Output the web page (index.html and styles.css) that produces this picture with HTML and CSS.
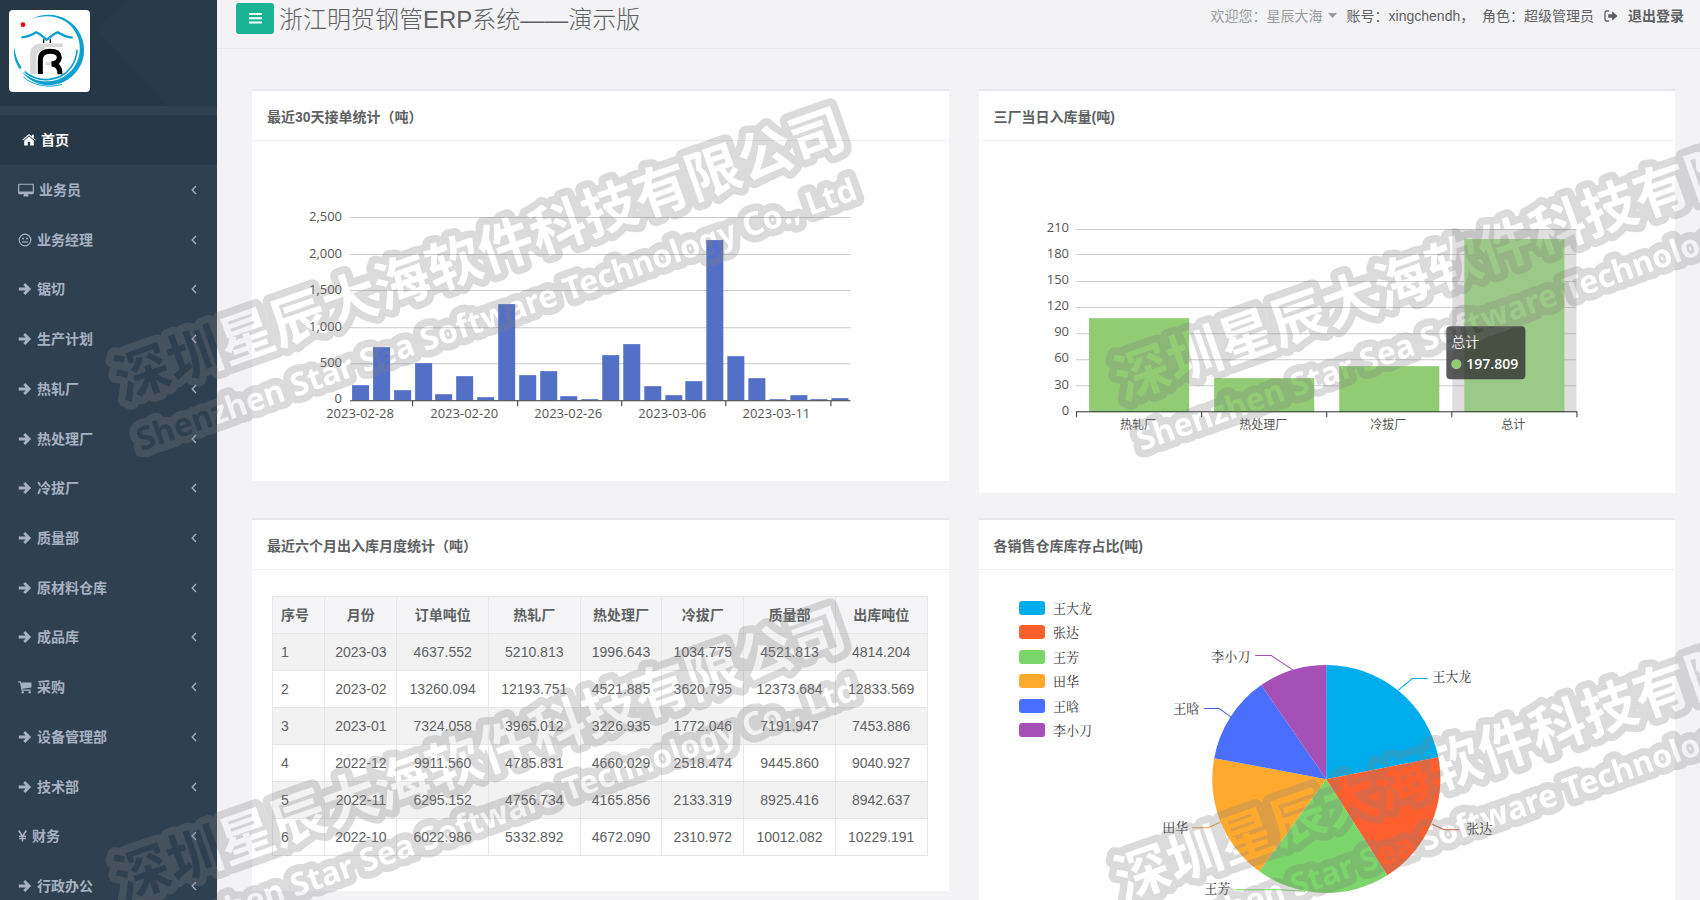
FILE: index.html
```html
<!DOCTYPE html>
<html lang="zh-CN">
<head>
<meta charset="utf-8">
<title>浙江明贺钢管ERP系统——演示版</title>
<link rel="stylesheet" href="styles.css">
</head>
<body>
<svg class="defs" aria-hidden="true">
  <symbol id="i-home" viewBox="0 0 14 14"><path d="M7 3.6 2.2 7.6V12a.6.6 0 0 0 .6.6h3V9h2.4v3.6h3a.6.6 0 0 0 .6-.6V7.600z"/><path d="M13.700 6.700 11.800 5.100V1.800h-1.900v1.700L7.700 1.600a1.100 1.100 0 0 0-1.400 0L.3 6.700l.7.9L7 2.600l6 5z"/></symbol>
  <symbol id="i-desktop" viewBox="0 0 16 14"><path fill-rule="evenodd" d="M1.300.8h13.400c.7 0 1.200.5 1.200 1.200v8c0 .7-.5 1.200-1.200 1.200H10c0 .9.600 1.200.600 1.700 0 .3-.2.500-.5.500H5.900a.5.500 0 0 1-.5-.5c0-.5.6-.8.600-1.700H1.300C.600 11.200.100 10.700.100 10V2C.100 1.300.600.800 1.300.800zm0 1v6.600h13.400V1.800z"/></symbol>
  <symbol id="i-meh" viewBox="0 0 14 14"><circle cx="7" cy="7" r="5.800" fill="none" stroke="currentColor" stroke-width="1.200"/><circle cx="5" cy="5.400" r="1"/><circle cx="9" cy="5.400" r="1"/><path d="M4 8.400h6v1.200H4z"/></symbol>
  <symbol id="i-arrow" viewBox="0 0 14 14"><path d="M.8 7h9.400M6.200 2l5 5-5 5" fill="none" stroke="currentColor" stroke-width="2.800"/></symbol>
  <symbol id="i-cart" viewBox="0 0 14 14"><path d="M0 1.200h2.600l.5 1.300h10.400v5L4.500 8.700l.2.900h8v1.200H3.600L2 2.400H0z"/><circle cx="4.700" cy="12.200" r="1.200"/><circle cx="11.700" cy="12.200" r="1.200"/></symbol>
  <symbol id="i-yen" viewBox="0 0 9 14"><path d="M.7 1.500 4.500 7.200 8.300 1.500M1 7.200h7M1 9.400h7M4.500 7v5.500" fill="none" stroke="currentColor" stroke-width="1.500"/></symbol>
  <symbol id="i-angle" viewBox="0 0 6 10"><path d="M5 1 1.200 5 5 9" fill="none" stroke="currentColor" stroke-width="1.300"/></symbol>
  <symbol id="i-bars" viewBox="0 0 13 11"><path d="M0 0h13v2H0zM0 4.300h13v2H0zM0 8.600h13v2H0z"/></symbol>
  <symbol id="i-out" viewBox="0 0 14 12"><path d="M5.200 1H3a2 2 0 0 0-2 2v6a2 2 0 0 0 2 2h2.200" fill="none" stroke="currentColor" stroke-width="1.300"/><path d="M4.200 4.200h4V1.200L13.500 6 8.200 10.800v-3h-4z"/></symbol>
  <symbol id="i-caret" viewBox="0 0 9 5"><path d="M0 0h9L4.500 5z"/></symbol>
</svg>

<div class="app">
  <aside class="sidebar">
    <div class="brand">
      <svg class="brand-pattern" viewBox="0 0 217 106" preserveAspectRatio="none" aria-hidden="true">
        <path d="M0 0h217v106h-50L95 28 128 0z" fill="#273a4a"/>
        <path d="M95 28 128 0h89v30z" fill="#283a49"/>
      </svg>
      <svg class="logo" viewBox="27 32 243 244" role="img" aria-label="公司标志">
        <path d="M94 58C150 28 218 52 242 106c25 55 2 115-52 141-45 20-97 8-127-34 34 32 78 40 116 24 52-22 74-80 52-130C210 58 155 36 94 58z" fill="#0ba0cf"/>
        <path d="M43 142c-4 24 2 46 16 66l6-4C52 184 45 165 43 142z" fill="#0ba0cf"/>
        <path d="M74 216c44 38 108 28 138-12 12-16 18-34 19-54" fill="none" stroke="#0ba0cf" stroke-width="5"/>
        <path d="M70 232c30 26 76 34 116 22" fill="none" stroke="#0ba0cf" stroke-width="3"/>
        <path d="M64 113c18-1 30-6 45-15 13 4 20 16 31 22 12-6 18-18 33-22 13 8 27 15 45 16" fill="none" stroke="#0ba0cf" stroke-width="7"/>
        <circle cx="69" cy="75" r="7" fill="#e60012"/>
        <path d="M96 224v-58q0-29 30-29h62M104 224v-50q0-29 30-29" fill="none" stroke="#d9d9d9" stroke-width="11"/>
        <path d="M131 119v11M151 119v11" stroke="#111" stroke-width="4"/>
        <path d="M121 223v-42q0-26 29-26 27 0 28 18-1 17-23 20 25 1 25 31" fill="none" stroke="#000" stroke-width="15"/>
        <path d="M137 187h16v9h-16z" fill="#d9d9d9"/>
      </svg>
    </div>
    <nav class="menu">
      <a class="item active" href="#"><svg class="ico"><use href="#i-home"/></svg>首页</a>
      <div class="groups">
        <a class="item" href="#"><svg class="ico wide"><use href="#i-desktop"/></svg>业务员<svg class="angle"><use href="#i-angle"/></svg></a>
        <a class="item" href="#"><svg class="ico"><use href="#i-meh"/></svg>业务经理<svg class="angle"><use href="#i-angle"/></svg></a>
        <a class="item" href="#"><svg class="ico"><use href="#i-arrow"/></svg>锯切<svg class="angle"><use href="#i-angle"/></svg></a>
        <a class="item" href="#"><svg class="ico"><use href="#i-arrow"/></svg>生产计划<svg class="angle"><use href="#i-angle"/></svg></a>
        <a class="item" href="#"><svg class="ico"><use href="#i-arrow"/></svg>热轧厂<svg class="angle"><use href="#i-angle"/></svg></a>
        <a class="item" href="#"><svg class="ico"><use href="#i-arrow"/></svg>热处理厂<svg class="angle"><use href="#i-angle"/></svg></a>
        <a class="item" href="#"><svg class="ico"><use href="#i-arrow"/></svg>冷拔厂<svg class="angle"><use href="#i-angle"/></svg></a>
        <a class="item" href="#"><svg class="ico"><use href="#i-arrow"/></svg>质量部<svg class="angle"><use href="#i-angle"/></svg></a>
        <a class="item" href="#"><svg class="ico"><use href="#i-arrow"/></svg>原材料仓库<svg class="angle"><use href="#i-angle"/></svg></a>
        <a class="item" href="#"><svg class="ico"><use href="#i-arrow"/></svg>成品库<svg class="angle"><use href="#i-angle"/></svg></a>
        <a class="item" href="#"><svg class="ico"><use href="#i-cart"/></svg>采购<svg class="angle"><use href="#i-angle"/></svg></a>
        <a class="item" href="#"><svg class="ico"><use href="#i-arrow"/></svg>设备管理部<svg class="angle"><use href="#i-angle"/></svg></a>
        <a class="item" href="#"><svg class="ico"><use href="#i-arrow"/></svg>技术部<svg class="angle"><use href="#i-angle"/></svg></a>
        <a class="item" href="#"><svg class="ico slim"><use href="#i-yen"/></svg>财务<svg class="angle"><use href="#i-angle"/></svg></a>
        <a class="item" href="#"><svg class="ico"><use href="#i-arrow"/></svg>行政办公<svg class="angle"><use href="#i-angle"/></svg></a>
      </div>
    </nav>
  </aside>

  <main class="page">
    <header class="topbar">
      <button class="toggle" type="button" aria-label="切换菜单"><svg class="bars"><use href="#i-bars"/></svg></button>
      <h1 class="title">浙江明贺钢管ERP系统——演示版</h1>
      <div class="user">
        <a class="who" href="#">欢迎您：星辰大海<svg class="caret"><use href="#i-caret"/></svg></a>
        <span>账号：xingchendh，&nbsp; 角色：超级管理员</span>
        <a class="logout" href="#"><svg class="out"><use href="#i-out"/></svg>退出登录</a>
      </div>
    </header>

    <div class="cards">
      <section class="card">
        <h2 class="card-title">最近30天接单统计（吨）</h2>
        <svg class="chart" viewBox="0 0 696 340">
          <path class="grid" d="M98 76.500h500M98 113.500h500M98 149.500h500M98 186.500h500M98 222.500h500"/>
          <g fill="#5470c6">
            <rect x="100" y="244" width="17" height="15"/><rect x="121" y="206" width="17" height="53"/><rect x="142" y="249" width="17" height="10"/><rect x="163" y="222" width="17" height="37"/><rect x="183" y="253" width="17" height="6"/><rect x="204" y="235" width="17" height="24"/><rect x="225" y="256" width="17" height="3"/><rect x="246" y="163" width="17" height="96"/><rect x="267" y="234" width="17" height="25"/><rect x="288" y="230" width="17" height="29"/><rect x="308" y="255" width="17" height="4"/><rect x="329" y="258" width="17" height="1"/><rect x="350" y="214" width="17" height="45"/><rect x="371" y="203" width="17" height="56"/><rect x="392" y="245" width="17" height="14"/><rect x="413" y="254" width="17" height="5"/><rect x="433" y="240" width="17" height="19"/><rect x="454" y="99" width="17" height="160"/><rect x="475" y="215" width="17" height="44"/><rect x="496" y="237" width="17" height="22"/><rect x="517" y="258" width="17" height="1"/><rect x="538" y="254" width="17" height="5"/><rect x="558" y="258" width="17" height="1"/><rect x="579" y="257" width="17" height="2"/>
          </g>
          <path class="axis" d="M98 259.500h500M160.500 259v6M265.500 259v6M369.500 259v6M473.500 259v6M578.500 259v6"/>
          <g class="tick end"><text x="90" y="80">2,500</text><text x="90" y="117">2,000</text><text x="90" y="153">1,500</text><text x="90" y="190">1,000</text><text x="90" y="226">500</text><text x="90" y="262">0</text></g>
          <g class="tick mid"><text x="108" y="277">2023-02-28</text><text x="212" y="277">2023-02-20</text><text x="316" y="277">2023-02-26</text><text x="420" y="277">2023-03-06</text><text x="524" y="277">2023-03-11</text></g>
        </svg>
      </section>

      <section class="card">
        <h2 class="card-title">三厂当日入库量(吨)</h2>
        <svg class="chart" viewBox="0 0 696 352">
          <path class="grid" d="M97 88.500h500M97 113.500h500M97 140.500h500M97 166.500h500M97 192.500h500M97 218.500h500M97 244.500h500"/>
          <rect x="473" y="88" width="124" height="183" fill="#969696" fill-opacity=".3"/>
          <g fill="#91cc75"><rect x="110" y="177" width="100" height="94"/><rect x="235" y="237" width="100" height="34"/><rect x="360" y="225" width="100" height="46"/><rect x="485" y="98" width="100" height="173" fill="#9bc987"/></g>
          <path class="axis" d="M97 270.500h500M97.500 270v6M222.500 270v6M347.500 270v6M472.500 270v6M597.500 270v6"/>
          <g class="tick end"><text x="90" y="91">210</text><text x="90" y="117">180</text><text x="90" y="143">150</text><text x="90" y="169">120</text><text x="90" y="195">90</text><text x="90" y="221">60</text><text x="90" y="248">30</text><text x="90" y="274">0</text></g>
          <g class="cat mid"><text x="159" y="288">热轧厂</text><text x="284" y="288">热处理厂</text><text x="409" y="288">冷拔厂</text><text x="534" y="288">总计</text></g>
          <rect x="467" y="185" width="79" height="53" rx="4" fill="#323232" fill-opacity=".8"/>
          <circle cx="477" cy="223" r="5" fill="#91cc75"/>
          <g class="tip"><text x="472" y="206">总计</text><text class="strong" x="487" y="228">197.809</text></g>
        </svg>
      </section>

      <section class="card">
        <h2 class="card-title">最近六个月出入库月度统计（吨）</h2>
        <div class="table-wrap">
          <table class="stats">
            <colgroup><col class="c-no"><col class="c-month"><col class="c-wide"><col class="c-wide"><col class="c-mid"><col class="c-mid"><col class="c-wide"><col class="c-wide"></colgroup>
            <thead><tr><th>序号</th><th>月份</th><th>订单吨位</th><th>热轧厂</th><th>热处理厂</th><th>冷拔厂</th><th>质量部</th><th>出库吨位</th></tr></thead>
            <tbody>
              <tr><td>1</td><td>2023-03</td><td>4637.552</td><td>5210.813</td><td>1996.643</td><td>1034.775</td><td>4521.813</td><td>4814.204</td></tr>
              <tr><td>2</td><td>2023-02</td><td>13260.094</td><td>12193.751</td><td>4521.885</td><td>3620.795</td><td>12373.684</td><td>12833.569</td></tr>
              <tr><td>3</td><td>2023-01</td><td>7324.058</td><td>3965.012</td><td>3226.935</td><td>1772.046</td><td>7191.947</td><td>7453.886</td></tr>
              <tr><td>4</td><td>2022-12</td><td>9911.560</td><td>4785.831</td><td>4660.029</td><td>2518.474</td><td>9445.860</td><td>9040.927</td></tr>
              <tr><td>5</td><td>2022-11</td><td>6295.152</td><td>4756.734</td><td>4165.856</td><td>2133.319</td><td>8925.416</td><td>8942.637</td></tr>
              <tr><td>6</td><td>2022-10</td><td>6022.986</td><td>5332.892</td><td>4672.090</td><td>2310.972</td><td>10012.082</td><td>10229.191</td></tr>
            </tbody>
          </table>
        </div>
      </section>

      <section class="card">
        <h2 class="card-title">各销售仓库库存占比(吨)</h2>
        <svg class="chart" viewBox="0 0 696 352">
          <path fill="#00adec" d="M347 209V95A114 114 0 0 1 459 187z"/>
          <path fill="#ff5f2e" d="M347 209 459 187A114 114 0 0 1 408 305z"/>
          <path fill="#7bd56a" d="M347 209 408 305A114 114 0 0 1 280 301z"/>
          <path fill="#ffaa2e" d="M347 209 280 301A114 114 0 0 1 235 188z"/>
          <path fill="#4a6fff" d="M347 209 235 188A114 114 0 0 1 282 115z"/>
          <path fill="#a450b6" d="M347 209 282 115A114 114 0 0 1 347 95z"/>
          <g fill="none">
            <path stroke="#00adec" d="M419 120 433 108.500H448"/>
            <path stroke="#d9534f" d="M453 254 465 259.500H480"/>
            <path stroke="#7bd56a" d="M326 321 300 319.500H256"/>
            <path stroke="#e8a040" d="M241 252 229 257.500H213"/>
            <path stroke="#4a5fc8" d="M252 147 240 138.500H225"/>
            <path stroke="#a450b6" d="M314 100 292 85.500H276"/>
          </g>
          <g><rect x="40" y="31" width="26" height="14" rx="3" fill="#00adec"/><rect x="40" y="55" width="26" height="14" rx="3" fill="#ff5f2e"/><rect x="40" y="80" width="26" height="14" rx="3" fill="#7bd56a"/><rect x="40" y="104" width="26" height="14" rx="3" fill="#ffaa2e"/><rect x="40" y="129" width="26" height="14" rx="3" fill="#4a6fff"/><rect x="40" y="153" width="26" height="14" rx="3" fill="#a450b6"/></g>
          <g class="name"><text x="74" y="43">王大龙</text><text x="74" y="67">张达</text><text x="74" y="92">王芳</text><text x="74" y="116">田华</text><text x="74" y="141">王晗</text><text x="74" y="165">李小刀</text>
          <text x="453" y="111">王大龙</text><text x="487" y="263">张达</text><text x="225" y="323">王芳</text><text x="183" y="262">田华</text><text x="194" y="143">王晗</text><text x="232" y="91">李小刀</text></g>
        </svg>
      </section>
    </div>
  </main>
</div>

<svg class="watermark" aria-hidden="true">
  <defs>
    <g id="wm-text">
      <text class="wm-cn" transform="translate(142 373) rotate(-19.400)" x="-27" y="20">深圳星辰大海软件科技有限公司</text>
      <text class="wm-en" transform="translate(146 438) rotate(-19.400)" x="-9" y="11">Shenzhen Star Sea Software Technology Co., Ltd</text>
    </g>
    <mask id="wm-mask" maskUnits="userSpaceOnUse" x="0" y="0" width="1000" height="600">
      <rect width="1000" height="600" fill="#fff"/>
      <use href="#wm-text" fill="#000"/>
    </mask>
    <g id="wm" mask="url(#wm-mask)"><use href="#wm-text" class="wm-line"/></g>
  </defs>
  <use href="#wm"/><use href="#wm" x="1000"/><use href="#wm" y="500"/><use href="#wm" x="1000" y="500"/>
</svg>
</body>
</html>
```
FILE: styles.css
```css
* { box-sizing: border-box; }
body {
  margin: 0;
  height: 100vh;
  overflow: hidden;
  background: #f3f3f5;
  color: #5e6163;
  font: 14px/20px "Liberation Sans", "Noto Sans CJK SC", sans-serif;
}
a { color: inherit; text-decoration: none; }
svg { fill: currentColor; }
.defs { position: absolute; width: 0; height: 0; }
.app { display: flex; height: 100vh; }

.sidebar { flex: none; width: 217px; background: #2f4050; color: #a7b1c2; overflow: hidden; }
.brand { position: relative; height: 106px; padding: 10px 9px; background: #263746; margin-bottom: 9px; }
.brand-pattern { position: absolute; inset: 0; width: 100%; height: 100%; }
.logo { position: relative; display: block; width: 81px; height: 82px; background: #fff; border-radius: 4px; }
.item { display: flex; align-items: center; gap: 5px; padding: 0 20px 0 18px; font-weight: bold; }
.item.active { height: 50px; padding-left: 22px; background: #293846; color: #fff; }
.groups { display: flex; flex-direction: column; height: calc(100vh - 154px); min-height: 600px; }
.groups .item { flex: 1; }
.ico { width: 14px; height: 14px; }
.ico.wide { width: 16px; }
.ico.slim { width: 9px; }
.angle { width: 6px; height: 10px; margin-left: auto; }

.page { flex: 1; min-width: 0; overflow: hidden; }
.topbar { display: flex; align-items: flex-start; height: 49px; padding: 3px 16px 0 19px; border-bottom: 1px solid #e9eaed; }
.toggle { display: flex; align-items: center; justify-content: center; width: 38px; height: 31px; padding: 0; border: 0; border-radius: 3px; background: #1ab394; color: #fff; }
.bars { width: 13px; height: 11px; }
.title { margin: 0 0 0 5px; font-size: 24px; line-height: 34px; font-weight: 300; font-family: "Liberation Sans", "Noto Sans CJK SC Light", "Noto Sans CJK SC", sans-serif; }
.user { display: flex; gap: 10px; margin-left: auto; line-height: 26px; }
.who { color: #999c9e; }
.caret { width: 9px; height: 5px; margin: 0 0 3px 5px; }
.logout { display: flex; align-items: center; gap: 10px; font-weight: bold; }
.out { width: 14px; height: 12px; }

.cards { display: grid; grid-template-columns: 1fr 1fr; align-items: start; gap: 25px 30px; padding: 40px 25px 25px 35px; }
.card { background: #fff; border-top: 2px solid #e7e8eb; }
.card-title { margin: 0; padding: 16px 15px 13px; border-bottom: 1px solid #eeeff1; font-size: 14px; line-height: 20px; }
.chart { display: block; width: 100%; height: auto; }
.grid { fill: none; stroke: #ccc; }
.axis { fill: none; stroke: #333; }
.tick { font: 13px "Open Sans", "Noto Sans", sans-serif; fill: #555; }
.cat { font: 12px "Open Sans", "Noto Sans CJK SC", sans-serif; fill: #555; }
.end { text-anchor: end; }
.mid { text-anchor: middle; }
.tip { font: 14px "Open Sans", "Noto Sans CJK SC", sans-serif; fill: #fff; }
.strong { font-weight: 600; }
.name { font: 13px "Liberation Serif", "Noto Serif CJK SC", "Noto Sans CJK SC", serif; fill: #333; }

.table-wrap { padding: 26px 21px 35px 20px; }
.stats { width: 100%; border-collapse: collapse; table-layout: fixed; text-align: center; }
.stats th, .stats td { height: 37px; padding: 8px 0; border: 1px solid #e7e7e9; }
.stats th { background: #f5f5f7; }
.stats th:first-child, .stats td:first-child { padding-left: 8px; text-align: left; }
.stats tbody tr:nth-child(odd) { background: #f2f2f3; }
.c-no { width: 8%; }
.c-month { width: 11%; }
.c-wide { width: 14%; }
.c-mid { width: 12.500%; }

.watermark { position: fixed; inset: 0; width: 100%; height: 100%; pointer-events: none; opacity: .28; }
.wm-cn { font: bold 55px "Noto Sans CJK SC", sans-serif; }
.wm-en { font: bold 32px "Noto Sans", sans-serif; }
.wm-line { fill: none; stroke: #837f7f; stroke-width: 15px; stroke-linejoin: round; }
```
